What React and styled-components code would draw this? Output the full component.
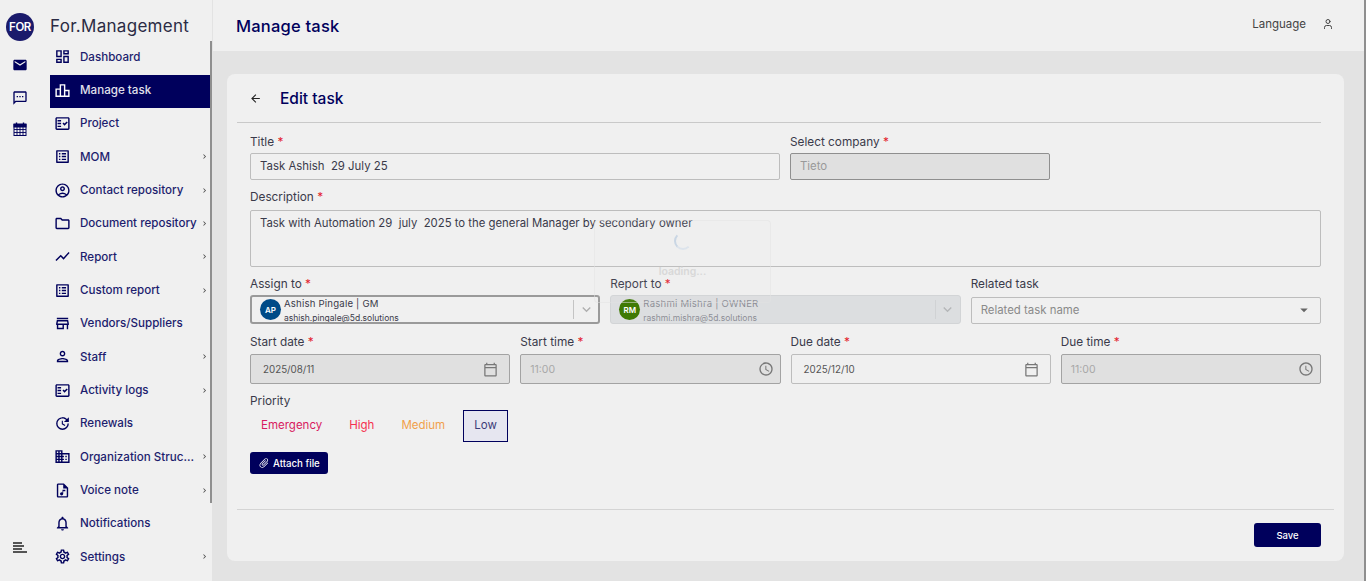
import React from 'react';
import styled, { createGlobalStyle } from 'styled-components';
import {
  MdOutlineDashboard, MdOutlineLeaderboard, MdOutlineFactCheck, MdOutlineListAlt,
  MdOutlineAccountCircle, MdOutlineFolder, MdShowChart, MdOutlineStore,
  MdOutlinePerson, MdOutlineUpdate, MdOutlineDomain, MdOutlineAudioFile,
  MdOutlineNotifications, MdOutlineSettings, MdEmail, MdOutlineSms,
  MdArrowBack, MdOutlineCalendarToday, MdOutlineAccessTime, MdAttachFile,
  MdKeyboardArrowDown, MdArrowDropDown, MdChevronRight,
} from 'react-icons/md';
import { LuUser } from 'react-icons/lu';

const NAVY = '#00005c';

const GlobalStyle = createGlobalStyle`
  html, body {
    margin: 0;
    height: 100%;
    overflow: hidden;
    background: #e3e3e3;
    font-family: Inter, "Open Sans", "Liberation Sans", sans-serif;
  }
  * { box-sizing: border-box; }
`;

const menu = [
  { label: 'Dashboard', icon: MdOutlineDashboard },
  { label: 'Manage task', icon: MdOutlineLeaderboard, active: true },
  { label: 'Project', icon: MdOutlineFactCheck },
  { label: 'MOM', icon: MdOutlineListAlt, more: true },
  { label: 'Contact repository', icon: MdOutlineAccountCircle, more: true },
  { label: 'Document repository', icon: MdOutlineFolder, more: true },
  { label: 'Report', icon: MdShowChart, more: true },
  { label: 'Custom report', icon: MdOutlineListAlt, more: true },
  { label: 'Vendors/Suppliers', icon: MdOutlineStore },
  { label: 'Staff', icon: MdOutlinePerson, more: true },
  { label: 'Activity logs', icon: MdOutlineFactCheck, more: true },
  { label: 'Renewals', icon: MdOutlineUpdate },
  { label: 'Organization Structure', icon: MdOutlineDomain, more: true },
  { label: 'Voice note', icon: MdOutlineAudioFile, more: true },
  { label: 'Notifications', icon: MdOutlineNotifications },
  { label: 'Settings', icon: MdOutlineSettings, more: true },
];

// calendar in the left rail, solid head with a grid under it
function RailCalendar() {
  return (
    <svg width="14" height="14" viewBox="0 0 14 14" fill="none" stroke={NAVY} strokeWidth="1" style={{ marginTop: -1 }}>
      <rect x="1" y="2.5" width="12" height="11" fill="none" />
      <rect x="1" y="2" width="12" height="3" fill={NAVY} />
      <path d="M3.5 0.5v2.5M10.5 0.5v2.5" strokeWidth="1.4" />
      <path d="M1 7.5h12M1 10.5h12M4 5v8.5M7 5v8.5M10 5v8.5" strokeWidth="0.9" />
    </svg>
  );
}

function RailMenuIcon() {
  return (
    <svg width="14" height="11" viewBox="0 0 14 11" fill="none" stroke="#222" strokeWidth="1.3">
      <path d="M0 1h9M0 4h11M0 7h9M0 10h14" />
    </svg>
  );
}

function Label({ text, required }) {
  return (
    <FieldLabel>
      {text}
      {required && <Star> *</Star>}
    </FieldLabel>
  );
}

function DateField({ label, value, disabled, time }) {
  const Icon = time ? MdOutlineAccessTime : MdOutlineCalendarToday;
  return (
    <Field>
      <Label text={label} required />
      <PickerBox $disabled={disabled} $time={time}>
        <PickerValue $time={time}>{value}</PickerValue>
        <Icon size={time ? 16 : 15} color="#777" />
      </PickerBox>
    </Field>
  );
}

function PersonSelect({ initials, name, email, color, disabled }) {
  return (
    <SelectBox $disabled={disabled}>
      <Avatar $color={color}>{initials}</Avatar>
      <PersonText $disabled={disabled}>
        <PersonName>{name}</PersonName>
        <PersonMail>{email}</PersonMail>
      </PersonText>
      <SelectDivider $disabled={disabled} />
      <SelectArrow>
        <MdKeyboardArrowDown size={17} color={disabled ? '#b5b7b9' : '#b0b0b0'} />
      </SelectArrow>
    </SelectBox>
  );
}

export default function App() {
  return (
    <Page>
      <GlobalStyle />
      <Rail>
        <Logo>FOR</Logo>
        <RailIcons>
          <MdEmail size={16} color={NAVY} />
          <MdOutlineSms size={16} color={NAVY} />
          <RailCalendar />
        </RailIcons>
        <RailBottom>
          <RailMenuIcon />
        </RailBottom>
      </Rail>

      <Sidebar>
        <Brand>For.Management</Brand>
        <Menu>
          {menu.map((item) => (
            <MenuItem key={item.label} $active={item.active}>
              <item.icon size={17} />
              <MenuLabel>{item.label}</MenuLabel>
              {item.more && (
                <MenuArrow>
                  <MdChevronRight size={9} />
                </MenuArrow>
              )}
            </MenuItem>
          ))}
        </Menu>
      </Sidebar>

      <Main>
        <Header>
          <PageTitle>Manage task</PageTitle>
          <HeaderRight>
            <span>Language</span>
            <LuUser size={12} color="#444" />
          </HeaderRight>
        </Header>

        <Content>
          <Card>
            <CardHead>
              <MdArrowBack size={13} color="#222" />
              <CardTitle>Edit task</CardTitle>
            </CardHead>

            <Form>
              <TopRow>
                <Field>
                  <Label text="Title" required />
                  <TextBox>Task Ashish&nbsp; 29 July 25</TextBox>
                </Field>
                <Field>
                  <Label text="Select company" required />
                  <TextBox $disabled>Tieto</TextBox>
                </Field>
              </TopRow>

              <DescField>
                <Label text="Description" required />
                <TextArea>Task with Automation 29&nbsp; july&nbsp; 2025 to the general Manager by secondary owner</TextArea>
              </DescField>

              <ThreeRow>
                <Field>
                  <Label text="Assign to" required />
                  <PersonSelect
                    initials="AP"
                    name="Ashish Pingale | GM"
                    email="ashish.pingale@5d.solutions"
                    color="#004b87"
                  />
                </Field>
                <Field>
                  <Label text="Report to" required />
                  <PersonSelect
                    initials="RM"
                    name="Rashmi Mishra | OWNER"
                    email="rashmi.mishra@5d.solutions"
                    color="#3f7a05"
                    disabled
                  />
                </Field>
                <Field>
                  <FieldLabel>Related task</FieldLabel>
                  <RelatedBox>
                    <span>Related task name</span>
                    <MdArrowDropDown size={18} color="#666" />
                  </RelatedBox>
                </Field>
              </ThreeRow>

              <FourRow>
                <DateField label="Start date" value="2025/08/11" disabled />
                <DateField label="Start time" value="11:00" disabled time />
                <DateField label="Due date" value="2025/12/10" />
                <DateField label="Due time" value="11:00" disabled time />
              </FourRow>

              <Priority>
                <FieldLabel>Priority</FieldLabel>
                <PriorityRow>
                  <PriorityBtn $color="#d81b60">Emergency</PriorityBtn>
                  <PriorityBtn $color="#f5304f">High</PriorityBtn>
                  <PriorityBtn $color="#f0a04b">Medium</PriorityBtn>
                  <PriorityBtn $color="#3c3c78" $selected>Low</PriorityBtn>
                </PriorityRow>
              </Priority>

              <AttachBtn>
                <AttachIcon>
                  <MdAttachFile size={12} />
                </AttachIcon>
                Attach file
              </AttachBtn>
            </Form>

            <CardFoot>
              <SaveBtn>Save</SaveBtn>
            </CardFoot>

            <Loading>
              <Spinner />
              <LoadingText>loading...</LoadingText>
            </Loading>
          </Card>
        </Content>
      </Main>
    </Page>
  );
}

const Page = styled.div`
  display: flex;
  width: 1366px;
  height: 581px;
  overflow: hidden;
  background: #f0f0f0;
`;

const Rail = styled.aside`
  width: 50px;
  flex: none;
  display: flex;
  flex-direction: column;
  padding: 13px 0 28px 6px;
  background: #f0f0f0;
`;

const Logo = styled.div`
  width: 28px;
  height: 28px;
  border-radius: 50%;
  background: #1a1a6b;
  color: #fff;
  font-size: 11.5px;
  font-weight: 600;
  letter-spacing: -0.4px;
  display: flex;
  align-items: center;
  justify-content: center;
`;

const RailIcons = styled.div`
  display: flex;
  flex-direction: column;
  align-items: center;
  width: 28px;
  gap: 17px;
  margin-top: 16px;
`;

const RailBottom = styled.div`
  margin-top: auto;
  width: 28px;
  display: flex;
  justify-content: center;
`;

const Sidebar = styled.aside`
  position: relative;
  width: 163px;
  flex: none;
  background: #f0f0f0;
  &::before {
    content: '';
    position: absolute;
    top: 41px;
    right: 1px;
    width: 2px;
    height: 462px;
    background: #8f8f8f;
  }
  &::after {
    content: '';
    position: absolute;
    top: 0;
    right: 0;
    width: 1px;
    height: 100%;
    background: #e3e3e3;
  }
`;

const Brand = styled.div`
  height: 41.6px;
  padding-top: 16px;
  font-size: 17px;
  line-height: 20px;
  color: #2b2b44;
  letter-spacing: 0.3px;
  white-space: nowrap;
`;

const Menu = styled.nav`
  display: flex;
  flex-direction: column;
`;

const MenuItem = styled.div`
  width: 160px;
  height: 33.33px;
  flex: none;
  display: flex;
  align-items: center;
  padding: 0 1px 3px 4px;
  background: ${(p) => (p.$active ? NAVY : 'transparent')};
  color: ${(p) => (p.$active ? '#fff' : NAVY)};
  & > svg {
    flex: none;
  }
`;

const MenuLabel = styled.span`
  margin-left: 9px;
  flex: 1;
  min-width: 0;
  font-size: 11.6px;
  font-weight: 500;
  color: inherit;
  opacity: 0.88;
  white-space: nowrap;
  overflow: hidden;
  text-overflow: ellipsis;
`;

const MenuArrow = styled.span`
  display: flex;
  flex: none;
  margin-left: 3px;
  color: #444;
`;

const Main = styled.main`
  flex: 1;
  min-width: 0;
  display: flex;
  flex-direction: column;
  border-right: 2px solid #8f8f8f;
`;

const Header = styled.header`
  height: 51px;
  flex: none;
  display: flex;
  align-items: center;
  justify-content: space-between;
  padding: 0 30px 0 23px;
  background: #f0f0f0;
`;

const PageTitle = styled.h1`
  margin: 0;
  font-size: 16.5px;
  font-weight: 500;
  color: ${NAVY};
  letter-spacing: 0.2px;
`;

const HeaderRight = styled.div`
  display: flex;
  align-items: center;
  gap: 16px;
  font-size: 11.5px;
  color: #444;
  margin-top: -3px;
`;

const Content = styled.div`
  flex: 1;
  min-height: 0;
  padding: 23px 20px 20px 14px;
  background: #e3e3e3;
`;

const Card = styled.section`
  position: relative;
  height: 487px;
  display: flex;
  flex-direction: column;
  border-radius: 8px;
  background: #f0f0f0;
`;

const CardHead = styled.div`
  height: 49px;
  flex: none;
  margin: 0 23px 0 10px;
  padding-left: 12px;
  display: flex;
  align-items: center;
  border-bottom: 1px solid #c9c9c9;
`;

const CardTitle = styled.h2`
  margin: 0 0 0 18px;
  font-size: 15.5px;
  font-weight: 500;
  color: ${NAVY};
`;

const Form = styled.div`
  padding: 12px 23px 0;
  display: flex;
  flex-direction: column;
  gap: 10px;
  flex: 1;
`;

const TopRow = styled.div`
  display: grid;
  grid-template-columns: 530px 260px;
  gap: 10px;
`;

const ThreeRow = styled.div`
  display: grid;
  grid-template-columns: repeat(3, 1fr);
  gap: 10px;
`;

const FourRow = styled.div`
  display: grid;
  grid-template-columns: repeat(4, 1fr);
  gap: 10px;
  margin-top: 1px;
`;

const Field = styled.div`
  display: flex;
  flex-direction: column;
  min-width: 0;
`;

const DescField = styled(Field)`
  & > label {
    height: 20px;
  }
`;

const FieldLabel = styled.label`
  display: block;
  height: 18px;
  font-size: 11.8px;
  line-height: 14px;
  color: #3a3a4a;
`;

const Star = styled.span`
  color: #e3202c;
`;

const TextBox = styled.div`
  height: 27px;
  display: flex;
  align-items: center;
  padding: 0 9px 2px;
  font-size: 11.4px;
  border-radius: 2px;
  border: 1px solid ${(p) => (p.$disabled ? '#8f8f8f' : '#bdbdbd')};
  background: ${(p) => (p.$disabled ? '#e0e0e0' : 'transparent')};
  color: ${(p) => (p.$disabled ? '#999' : '#3a3a4a')};
`;

const TextArea = styled.div`
  height: 57px;
  padding: 5px 9px;
  font-size: 11.35px;
  line-height: 14px;
  color: #3a3a4a;
  border: 1px solid #bdbdbd;
  border-radius: 2px;
`;

const SelectBox = styled.div`
  height: 29px;
  display: flex;
  align-items: center;
  padding-left: 8px;
  overflow: hidden;
  border-radius: 3px;
  border: ${(p) => (p.$disabled ? '1px solid #d2d4d6' : '2px solid #9a9a9a')};
  background: ${(p) => (p.$disabled ? '#dcdee0' : 'transparent')};
`;

const Avatar = styled.div`
  width: 21px;
  height: 21px;
  flex: none;
  border-radius: 50%;
  display: flex;
  align-items: center;
  justify-content: center;
  background: ${(p) => p.$color};
  color: #fff;
  font-size: 8px;
  font-weight: 600;
`;

const PersonText = styled.div`
  margin-left: 3px;
  flex: 1;
  min-width: 0;
  opacity: ${(p) => (p.$disabled ? 0.5 : 1)};
  color: #3a3a4a;
  white-space: nowrap;
`;

const PersonName = styled.div`
  font-size: 9.6px;
  line-height: 12px;
  letter-spacing: 0.2px;
`;

const PersonMail = styled.div`
  font-size: 8.5px;
  line-height: 10px;
  margin-top: 3px;
  margin-bottom: -1px;
`;

const SelectDivider = styled.span`
  width: 1px;
  height: 19px;
  flex: none;
  background: ${(p) => (p.$disabled ? '#d0d2d4' : '#c4c4c4')};
`;

const SelectArrow = styled.span`
  width: 24px;
  flex: none;
  display: flex;
  justify-content: center;
`;

const RelatedBox = styled.div`
  height: 27px;
  margin-top: 2px;
  display: flex;
  align-items: center;
  justify-content: space-between;
  padding: 0 7px 2px 9px;
  font-size: 11.4px;
  color: #8a8a8a;
  border: 1px solid #bdbdbd;
  border-radius: 2px;
`;

const PickerBox = styled.div`
  height: 30px;
  margin-top: 1px;
  display: flex;
  align-items: center;
  justify-content: space-between;
  padding: 0 ${(p) => (p.$time ? '6px' : '11px')} 0 12px;
  border-radius: 2px;
  border: 1px solid ${(p) => (p.$disabled ? '#a3a3a3' : '#bdbdbd')};
  background: ${(p) => (p.$disabled ? '#e0e0e0' : 'transparent')};
`;

const PickerValue = styled.span`
  font-size: ${(p) => (p.$time ? '10.5px' : '9.8px')};
  margin-left: ${(p) => (p.$time ? '-3px' : '0')};
  color: ${(p) => (p.$time ? '#a8a8a8' : '#555')};
`;

const Priority = styled.div`
  display: flex;
  flex-direction: column;
`;

const PriorityRow = styled.div`
  display: flex;
  align-items: center;
  margin-top: -2px;
`;

const PriorityBtn = styled.button`
  height: 32px;
  padding: 0 10px 2px;
  margin-right: 5px;
  margin-left: ${(p) => (p.$selected ? '2px' : '0')};
  font: inherit;
  font-size: 11.5px;
  color: ${(p) => p.$color};
  background: ${(p) => (p.$selected ? '#e6e6f0' : 'transparent')};
  border: ${(p) => (p.$selected ? `1px solid ${NAVY}` : '1px solid transparent')};
`;

const AttachBtn = styled.button`
  align-self: flex-start;
  height: 22px;
  display: flex;
  align-items: center;
  gap: 3px;
  padding: 0 8px;
  font: inherit;
  font-size: 9.7px;
  font-weight: 500;
  color: #fff;
  background: ${NAVY};
  border: 0;
  border-radius: 3px;
`;

const AttachIcon = styled.span`
  display: flex;
  transform: rotate(45deg);
`;

const CardFoot = styled.div`
  margin: 0 10px;
  height: 52px;
  flex: none;
  padding: 13px 13px 0 0;
  display: flex;
  justify-content: flex-end;
  border-top: 1px solid #d4d4d4;
`;

const SaveBtn = styled.button`
  width: 67px;
  height: 24px;
  font: inherit;
  font-size: 9.5px;
  font-weight: 500;
  color: #fff;
  background: ${NAVY};
  border: 0;
  border-radius: 3px;
`;

const Loading = styled.div`
  position: absolute;
  left: 367px;
  top: 146px;
  width: 177px;
  height: 83px;
  display: flex;
  flex-direction: column;
  align-items: center;
  padding-top: 11px;
  border-radius: 4px;
  background: rgba(240, 240, 240, 0.06);
  border: 1px solid rgba(225, 225, 225, 0.5);
`;

const Spinner = styled.div`
  width: 18px;
  height: 18px;
  border-radius: 50%;
  border: 2px solid transparent;
  border-left-color: #c9d6e4;
  border-bottom-color: #dde4ec;
`;

const LoadingText = styled.div`
  margin-top: 15px;
  font-size: 10.5px;
  font-weight: 600;
  color: #d8d8d8;
`;
